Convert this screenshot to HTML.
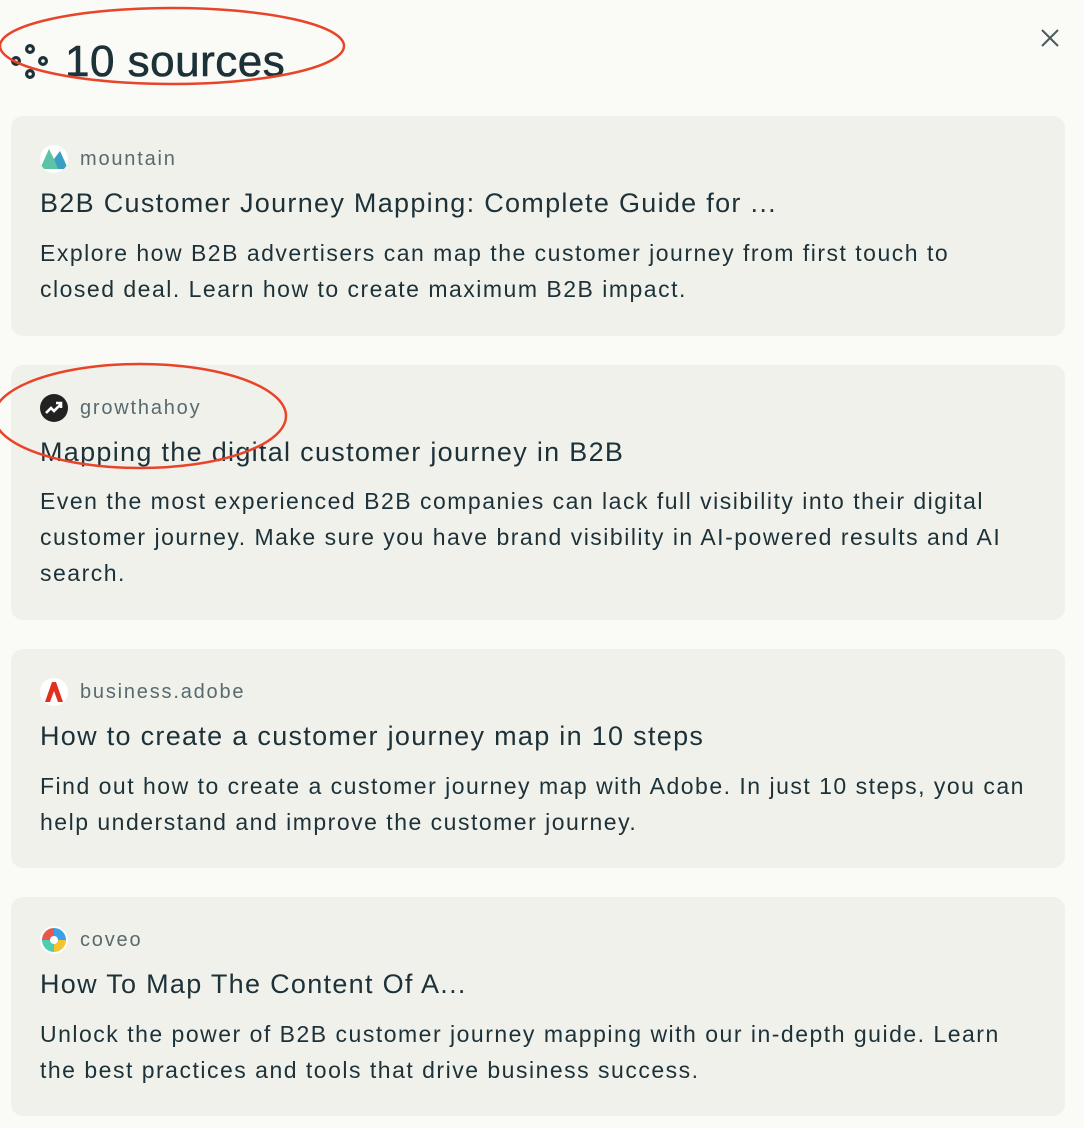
<!DOCTYPE html>
<html><head><style>
body{margin:0;width:1084px;height:1128px;background:#fafaf6;font-family:"Liberation Sans",sans-serif;color:#1c3138;position:relative;overflow:hidden}
.card{position:absolute;left:11px;width:1054px;background:#f1f1ec;border-radius:12px}
.src{position:absolute;left:29px;font-size:20px;letter-spacing:1.8px;color:#586a6e;display:flex;align-items:center}
.src .ic{width:28px;height:28px;border-radius:50%;margin-right:12px;display:inline-block;overflow:hidden;background:#fff}
.t{position:absolute;left:29px;font-size:27px;letter-spacing:1.3px;white-space:nowrap}
.d{position:absolute;left:29px;font-size:23px;line-height:36px;letter-spacing:1.5px;white-space:nowrap}
</style></head><body>
<svg style="position:absolute;left:10px;top:43px" width="40" height="38" viewBox="0 0 40 38" fill="none" stroke="#1c3138" stroke-width="3.2"><circle cx="20" cy="6" r="3.4"/><circle cx="6" cy="18" r="3.4"/><circle cx="33" cy="18" r="3.4"/><circle cx="20" cy="31" r="3.4"/></svg>
<div style="position:absolute;left:65px;top:37px;font-size:44px;font-weight:500;letter-spacing:0.5px;-webkit-text-stroke:0.6px #1c3138">10 sources</div>
<svg style="position:absolute;left:1040px;top:28px" width="20" height="20" viewBox="0 0 20 20" stroke="#4a5a5e" stroke-width="2"><path d="M2 2L18 18M18 2L2 18"/></svg>

<div class="card" style="top:116px;height:220px">
<div class="src" style="top:29px"><span class="ic"><svg width="28" height="28" viewBox="0 0 28 28"><path d="M0 24L9 4L16 18L20 6L28 24Z" fill="#5cc4a4"/><path d="M14 14L20 6L28 24L18 24Z" fill="#3a9fc0"/></svg></span>mountain</div>
<div class="t" style="top:72px">B2B Customer Journey Mapping: Complete Guide for ...</div>
<div class="d" style="top:119px">Explore how B2B advertisers can map the customer journey from first touch to<br>closed deal. Learn how to create maximum B2B impact.</div>
</div>
<div class="card" style="top:365px;height:255px">
<div class="src" style="top:29px"><span class="ic" style="background:#222"><svg width="28" height="28" viewBox="0 0 28 28" fill="none" stroke="#fff" stroke-width="2.6"><path d="M6 19L11 14L14 17L21 10M16 9H21V14"/></svg></span>growthahoy</div>
<div class="t" style="top:72px">Mapping the digital customer journey in B2B</div>
<div class="d" style="top:118px">Even the most experienced B2B companies can lack full visibility into their digital<br>customer journey. Make sure you have brand visibility in AI-powered results and AI<br>search.</div>
</div>
<div class="card" style="top:649px;height:219px">
<div class="src" style="top:29px"><span class="ic"><svg width="28" height="28" viewBox="0 0 28 28"><path d="M5 24L12 4H16L23 24H18L14 13L10 24Z" fill="#e0301e"/></svg></span>business.adobe</div>
<div class="t" style="top:72px">How to create a customer journey map in 10 steps</div>
<div class="d" style="top:119px">Find out how to create a customer journey map with Adobe. In just 10 steps, you can<br>help understand and improve the customer journey.</div>
</div>
<div class="card" style="top:897px;height:219px">
<div class="src" style="top:29px"><span class="ic"><svg width="28" height="28" viewBox="0 0 28 28"><path d="M14 14L14 2A12 12 0 0 0 2 14Z" fill="#e8574a"/><path d="M14 14L14 2A12 12 0 0 1 26 14Z" fill="#3aa0e8"/><path d="M14 14L26 14A12 12 0 0 1 14 26Z" fill="#f4c430"/><path d="M14 14L14 26A12 12 0 0 1 2 14Z" fill="#4ccfb0"/><circle cx="14" cy="14" r="4" fill="#fff"/></svg></span>coveo</div>
<div class="t" style="top:72px">How To Map The Content Of A...</div>
<div class="d" style="top:119px">Unlock the power of B2B customer journey mapping with our in-depth guide. Learn<br>the best practices and tools that drive business success.</div>
</div>

<svg style="position:absolute;left:0;top:0" width="1084" height="1128" fill="none" stroke="#e8442a" stroke-width="2.5">
<ellipse cx="172" cy="46" rx="172" ry="38"/>
<ellipse cx="140" cy="416" rx="146" ry="52"/>
</svg>
</body></html>
